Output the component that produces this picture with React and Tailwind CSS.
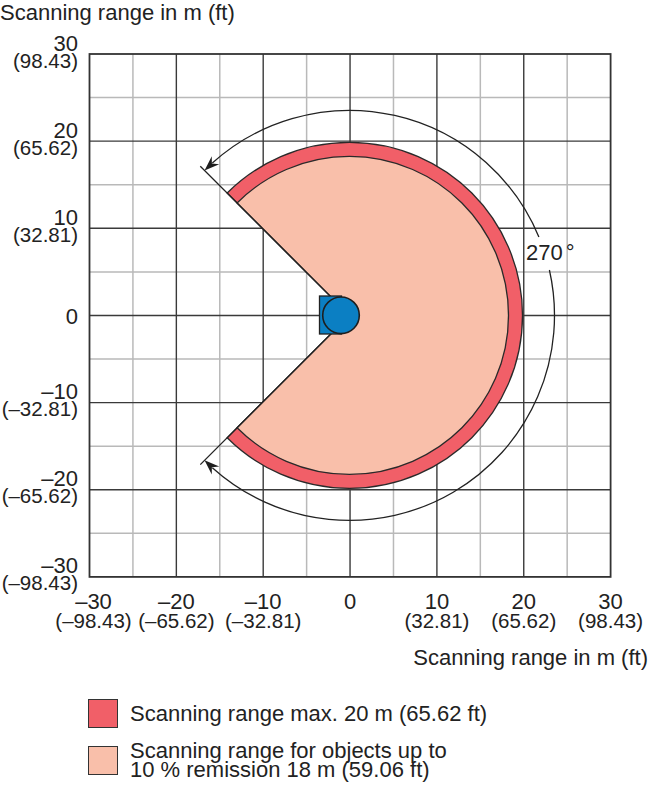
const X0 = 89.5
const SX = 86.85
const Y0 = 54
const SY = 87.15
const CX = 349.5
const CY = 315.4

const gx = (i) => X0 + i * SX
const gy = (j) => Y0 + j * SY

const ticks = [
  { v: '30', ft: '(98.43)' },
  { v: '20', ft: '(65.62)' },
  { v: '10', ft: '(32.81)' },
  { v: '0' },
  { v: '–10', ft: '(–32.81)' },
  { v: '–20', ft: '(–65.62)' },
  { v: '–30', ft: '(–98.43)' },
]

function pt(r, deg) {
  const a = (deg * Math.PI) / 180
  return [CX + r * Math.cos(a), CY - r * Math.sin(a)]
}

function sector(r) {
  const [x1, y1] = pt(r, 135)
  const [x2, y2] = pt(r, -135)
  return `M${CX} ${CY} L${x1} ${y1} A${r} ${r} 0 1 1 ${x2} ${y2} Z`
}

function arcSeg(r, a1, a2) {
  const [x1, y1] = pt(r, a1)
  const [x2, y2] = pt(r, a2)
  const large = a1 - a2 > 180 ? 1 : 0
  return `M${x1} ${y1} A${r} ${r} 0 ${large} 1 ${x2} ${y2}`
}

// barbed arrow head, tip on the arc at tipDeg
function arrow(r, tipDeg, baseDeg) {
  const [tx, ty] = pt(r, tipDeg)
  const [bx, by] = pt(r, baseDeg)
  const len = Math.hypot(tx - bx, ty - by)
  const dx = (tx - bx) / len
  const dy = (ty - by) / len
  const nx = -dy
  const ny = dx
  const p = (a, b) => `${tx - a * dx + b * nx} ${ty - a * dy + b * ny}`
  return `M${tx} ${ty} L${p(15, 5.5)} L${p(10, 0)} L${p(15, -5.5)} Z`
}

function Chart() {
  const half = [0.5, 1.5, 2.5, 3.5, 4.5, 5.5]
  const full = [1, 2, 3, 4, 5]
  const cut1 = pt(211, 135)
  const cut2 = pt(211, -135)

  return (
    <svg width="650" height="619" viewBox="0 26 650 619" className="block">
      {half.map((k) => (
        <g key={'m' + k} stroke="#b9b9b9" strokeWidth="1.5">
          <line x1={gx(k)} y1={gy(0)} x2={gx(k)} y2={gy(6)} />
          <line x1={gx(0)} y1={gy(k)} x2={gx(6)} y2={gy(k)} />
        </g>
      ))}
      {full.map((k) => (
        <g key={'M' + k} stroke="#3a3a3a" strokeWidth="1.4">
          <line x1={gx(k)} y1={gy(0)} x2={gx(k)} y2={gy(6)} />
          <line x1={gx(0)} y1={gy(k)} x2={gx(6)} y2={gy(k)} />
        </g>
      ))}
      <rect x={gx(0)} y={gy(0)} width={gx(6) - gx(0)} height={gy(6) - gy(0)}
        fill="none" stroke="#333" strokeWidth="1.8" />

      <path d={sector(173)} fill="#f15f68" stroke="#2a2a2a" strokeWidth="1.3" />
      <path d={sector(159)} fill="#f9bfaa" stroke="#2a2a2a" strokeWidth="1.3" />
      <line x1={CX} y1={CY} x2={cut1[0]} y2={cut1[1]} stroke="#222" strokeWidth="1.3" />
      <line x1={CX} y1={CY} x2={cut2[0]} y2={cut2[1]} stroke="#222" strokeWidth="1.3" />

      <rect x="319.5" y="296" width="22" height="38" fill="#0b7fc3" stroke="#222" strokeWidth="1.3" />
      <circle cx="341" cy="315.3" r="18.3" fill="#0b7fc3" stroke="#1e1e1e" strokeWidth="1.6" />

      <g fill="none" stroke="#222" strokeWidth="1.3">
        <path d={arcSeg(205, 132, 22.5)} />
        <path d={arcSeg(205, 12.8, -132)} />
      </g>
      <path d={arrow(205, 135, 131)} fill="#1e1e1e" />
      <path d={arrow(205, -135, -131)} fill="#1e1e1e" />
      <text x="526" y="260" fontSize="22" fill="#222">
        270<tspan dx="3">°</tspan>
      </text>

      <g fill="#222" textAnchor="end">
        {ticks.map((t, j) =>
          t.ft ? (
            <g key={'y' + j}>
              <text x="78" y={gy(j) - 3.5} fontSize="22">{t.v}</text>
              <text x="78" y={gy(j) + 13.5} fontSize="20.5">{t.ft}</text>
            </g>
          ) : (
            <text key={'y' + j} x="78" y={gy(j) + 9} fontSize="22">{t.v}</text>
          ),
        )}
      </g>
      <g fill="#222" textAnchor="middle">
        {ticks
          .slice()
          .reverse()
          .map((t, i) => {
            const x = gx(i) + (i === 0 ? 4 : 0)
            return (
              <g key={'x' + i}>
                <text x={x} y={gy(6) + 32} fontSize="22">{t.v}</text>
                {t.ft && <text x={x} y={gy(6) + 51} fontSize="20.5">{t.ft}</text>}
              </g>
            )
          })}
      </g>
    </svg>
  )
}

function LegendItem({ color, children }) {
  return (
    <div className="flex items-center gap-3">
      <div className="w-[30px] h-[29px] shrink-0 border border-[#333]"
        style={{ background: color }} />
      <div className="text-[22px] leading-[19px]">{children}</div>
    </div>
  )
}

export default function App() {
  return (
    <div className="w-[650px] h-[790px] overflow-hidden bg-white text-[#222] font-['Liberation_Sans',Arial,sans-serif]">
      <div className="text-[22px] leading-[26px]">Scanning range in m (ft)</div>
      <Chart />
      <div className="text-[22px] leading-[26px] text-right pr-[2px]">
        Scanning range in m (ft)
      </div>
      <div className="pl-[88px] mt-[28px] flex flex-col gap-[13px]">
        <LegendItem color="#f15f68">
          Scanning range max. 20 m (65.62 ft)
        </LegendItem>
        <LegendItem color="#f9bfaa">
          <div>Scanning range for objects up to</div>
          <div>10 % remission 18 m (59.06 ft)</div>
        </LegendItem>
      </div>
    </div>
  )
}
